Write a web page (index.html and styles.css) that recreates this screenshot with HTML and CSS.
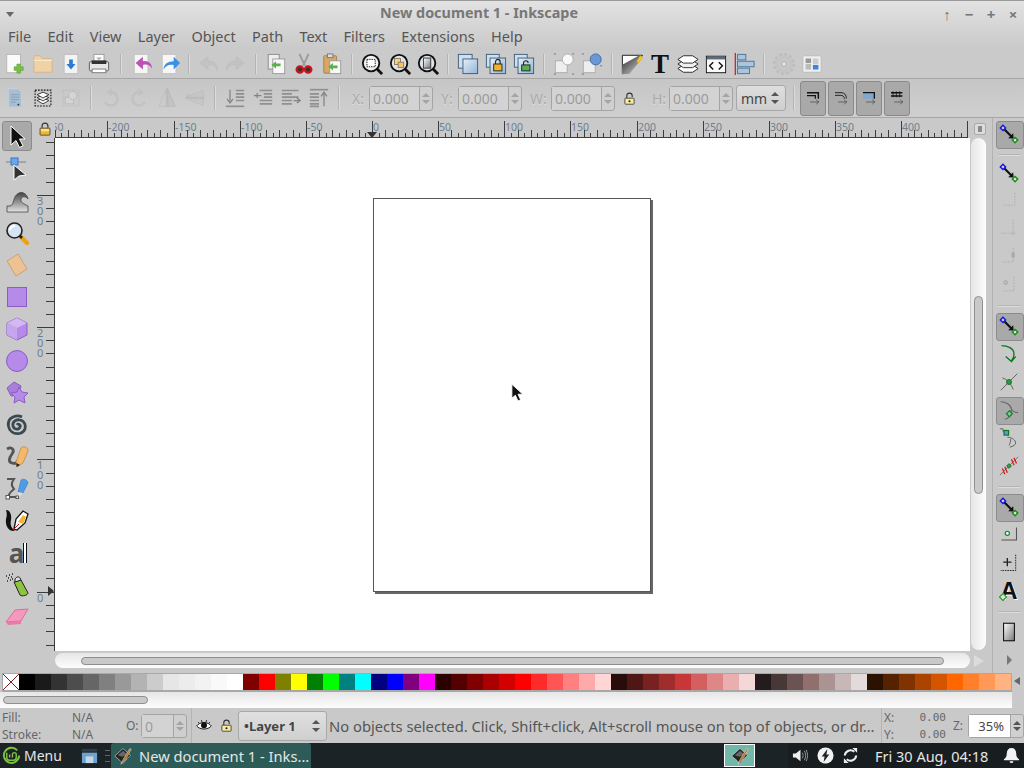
FILE: index.html
```html
<!DOCTYPE html>
<html lang="en">
<head>
  <meta charset="UTF-8">
  <title>New document 1 - Inkscape</title>
  <link rel="stylesheet" href="styles.css">
</head>
<body>

<!-- icon sprite -->
<svg class="sprite" xmlns="http://www.w3.org/2000/svg">
  <defs>
    <linearGradient id="gBlue" x1="0" y1="0" x2="1" y2="1"><stop offset="0" stop-color="#e8f0f8"/><stop offset="1" stop-color="#8fb4d8"/></linearGradient>
    <linearGradient id="gWave" x1="0" y1="0" x2="0" y2="1"><stop offset="0" stop-color="#444"/><stop offset="1" stop-color="#e4e4e4"/></linearGradient>
    <linearGradient id="gGrad" x1="0" y1="0" x2="1" y2="1"><stop offset="0" stop-color="#fff"/><stop offset="1" stop-color="#777"/></linearGradient>
    <linearGradient id="gMetal" x1="0" y1="0" x2="1" y2="1"><stop offset="0" stop-color="#222"/><stop offset="1" stop-color="#ddd"/></linearGradient>
  </defs>
  <symbol id="i-new" viewBox="0 0 24 24"><rect x="3" y="1.500" width="15" height="20" fill="#fbfbfb" stroke="#b5b5b5"/><path d="M14 12h4v3h3v4h-3v3h-4v-3h-3v-4h3z" fill="#78bf45" stroke="#5a9a30" stroke-width=".5"/></symbol>
  <symbol id="i-open" viewBox="0 0 24 24"><path d="M2 21V4l1-1h6l2 3h11v15z" fill="#efd2a6" stroke="#d4b588"/><path d="M2 8h20" stroke="#fbeed8"/></symbol>
  <symbol id="i-save" viewBox="0 0 24 24"><rect x="4.500" y="1.500" width="15" height="21" fill="#f3f3f3" stroke="#bcbcbc"/><path d="M10 7h4v5h3l-5 6-5-6h3z" fill="#2a7cd2"/></symbol>
  <symbol id="i-print" viewBox="0 0 24 24"><rect x="6.500" y="1.500" width="11" height="9" fill="#fff" stroke="#999"/><path d="M9 5h6l-3 3z" fill="#aaa"/><rect x="1.500" y="9.500" width="21" height="10" rx="1.500" fill="#e6e6e6" stroke="#555"/><rect x="4" y="8" width="16" height="4" fill="#333"/><rect x="4.500" y="17.500" width="15" height="4" fill="#fff" stroke="#777"/></symbol>
  <symbol id="i-import" viewBox="0 0 24 24"><rect x="3.500" y="1.500" width="15" height="21" fill="#f6f6f6" stroke="#c2c2c2"/><path d="M23 17c-2-4-6-5-10-4v5L5 11l8-7v5c6-1 10 3 10 8z" fill="#bb52b4"/></symbol>
  <symbol id="i-export" viewBox="0 0 24 24"><rect x="3.500" y="1.500" width="15" height="21" fill="#f6f6f6" stroke="#c2c2c2"/><path d="M5 18c0-6 5-9 11-9V4l7 7-7 7v-5c-5-1-9 1-11 5z" fill="#3a90e2"/></symbol>
  <symbol id="i-undo" viewBox="0 0 24 24"><path d="M22 19c-1-5-5-7-10-6v5L3 11l9-7v5c7-1 11 4 10 10z" fill="#bdbdbd" stroke="#aaa" stroke-width=".5"/></symbol>
  <symbol id="i-redo" viewBox="0 0 24 24"><path d="M2 19c1-5 5-7 10-6v5l9-7-9-7v5C5 8 1 13 2 19z" fill="#bdbdbd" stroke="#aaa" stroke-width=".5"/></symbol>
  <symbol id="i-copy" viewBox="0 0 24 24"><rect x="3.500" y="1.500" width="12" height="16" fill="#eee" stroke="#888"/><rect x="8.500" y="6.500" width="13" height="16" fill="#f8f8f8" stroke="#999"/><path d="M7 13l5-4v2.500h5v3h-5V17z" fill="#5ab04a"/></symbol>
  <symbol id="i-cut" viewBox="0 0 24 24"><path d="M7 1l6 13M17 1l-6 13" stroke="#999" stroke-width="2" fill="none"/><circle cx="7.500" cy="18" r="3.500" fill="#333" stroke="#c8161d" stroke-width="2.500"/><circle cx="16.500" cy="18" r="3.500" fill="#333" stroke="#c8161d" stroke-width="2.500"/></symbol>
  <symbol id="i-paste" viewBox="0 0 24 24"><rect x="3" y="3" width="14" height="19" rx="1" fill="#d5a868" stroke="#a87e48"/><rect x="7" y="1" width="6" height="4" fill="#ddd" stroke="#777"/><rect x="9.500" y="8.500" width="12" height="14" fill="#f8f8f8" stroke="#999"/><path d="M8 15l5-4v2.500h5v3h-5V19z" fill="#5ab04a"/></symbol>
  <symbol id="i-zoomsel" viewBox="0 0 24 24"><circle cx="11" cy="11" r="9" fill="#eef2f7" stroke="#111" stroke-width="2"/><path d="M17 17l6 6" stroke="#111" stroke-width="3"/><rect x="6.500" y="7" width="9" height="8" fill="#fff" stroke="#111" stroke-dasharray="1.500 1"/></symbol>
  <symbol id="i-zoomdraw" viewBox="0 0 24 24"><circle cx="11" cy="11" r="9" fill="#dde6ef" stroke="#111" stroke-width="2"/><path d="M17 17l6 6" stroke="#111" stroke-width="3"/><rect x="6" y="6" width="6.500" height="6.500" fill="#f0d878" stroke="#876"/><rect x="10" y="10" width="6" height="6" fill="#f3c760" stroke="#876"/></symbol>
  <symbol id="i-zoompage" viewBox="0 0 24 24"><circle cx="11" cy="11" r="9" fill="#dde6ef" stroke="#111" stroke-width="2"/><path d="M17 17l6 6" stroke="#111" stroke-width="3"/><rect x="7" y="5.500" width="8" height="11" fill="url(#gGrad)" stroke="#333"/></symbol>
  <symbol id="i-dup" viewBox="0 0 24 24"><rect x="1.500" y="1.500" width="15" height="15" fill="#cde0f0" stroke="#3d5a75"/><rect x="6.500" y="6.500" width="16" height="16" fill="url(#gBlue)" stroke="#3d5a75"/></symbol>
  <symbol id="i-clone" viewBox="0 0 24 24"><rect x="1.500" y="1.500" width="14" height="14" fill="#cde0f0" stroke="#3d5a75"/><rect x="5.500" y="5.500" width="17" height="17" fill="url(#gBlue)" stroke="#3d5a75"/><rect x="9.500" y="12" width="9" height="7.500" fill="#f0b429" stroke="#222"/><path d="M11.500 12V9.500a2.500 2.500 0 0 1 5 0V12" fill="none" stroke="#222" stroke-width="1.200"/></symbol>
  <symbol id="i-unlink" viewBox="0 0 24 24"><rect x="1.500" y="1.500" width="14" height="14" fill="#cde0f0" stroke="#3d5a75"/><rect x="5.500" y="5.500" width="17" height="17" fill="url(#gBlue)" stroke="#3d5a75"/><rect x="9.500" y="13" width="9" height="6.500" fill="#58b04a" stroke="#222"/><path d="M11.500 13v-2a2.500 2.500 0 0 1 5 0" fill="none" stroke="#222" stroke-width="1.200"/></symbol>
  <symbol id="i-group" viewBox="0 0 24 24"><rect x="2.500" y="8.500" width="13" height="13" fill="#eee" stroke="#aaa"/><circle cx="16" cy="7" r="6" fill="#f8f8f8" stroke="#aaa"/><path d="M1 1h2M21 1h2M1 23h2M21 23h2" stroke="#666"/></symbol>
  <symbol id="i-ungroup" viewBox="0 0 24 24"><rect x="2.500" y="8.500" width="13" height="13" fill="#eee" stroke="#aaa"/><circle cx="16" cy="7" r="6" fill="#6b98d4" stroke="#3a6aa8"/><path d="M1 1h2M21 14h2M1 23h2" stroke="#666"/></symbol>
  <symbol id="i-fill" viewBox="0 0 24 24"><path d="M1.500 2.500h22l-20 20h-2z" fill="#fff" stroke="#111"/><path d="M1 23V13L21 2l3 3L9 23z" fill="url(#gMetal)"/><path d="M17 9l4-6 3 2-5 6z" fill="#f5c518"/></symbol>
  <symbol id="i-layers" viewBox="0 0 24 24"><path d="M1 17l6-4h10l6 4-6 4H7z" fill="#fff" stroke="#222"/><path d="M1 12l6-4h10l6 4-6 4H7z" fill="#eee" stroke="#222"/><path d="M1 7l6-4h10l6 4-6 4H7z" fill="#fff" stroke="#222"/></symbol>
  <symbol id="i-xml" viewBox="0 0 24 24"><rect x="1.500" y="3.500" width="21" height="18" fill="#fafafa" stroke="#111"/><rect x="2" y="4" width="20" height="3" fill="#5a6b7b"/><path d="M9 10l-4 4 4 4M15 10l4 4-4 4" fill="none" stroke="#111" stroke-width="1.500"/></symbol>
  <symbol id="i-align" viewBox="0 0 24 24"><rect x="5" y="1.500" width="9" height="6" fill="#a9c5e0" stroke="#50708e"/><rect x="5" y="9" width="18" height="6" fill="#a9c5e0" stroke="#50708e"/><rect x="5" y="16.500" width="13" height="6" fill="#a9c5e0" stroke="#50708e"/><path d="M2.500 0v24" stroke="#c8161d" stroke-width="1.300"/></symbol>
  <symbol id="i-gear" viewBox="0 0 24 24"><circle cx="12" cy="12" r="8" fill="none" stroke="#c4c4c4" stroke-width="5" /><circle cx="12" cy="12" r="11" fill="none" stroke="#bbb" stroke-width="2" stroke-dasharray="3 2.760"/><circle cx="12" cy="12" r="3" fill="#ddd" stroke="#aaa"/></symbol>
  <symbol id="i-doc" viewBox="0 0 24 24"><rect x="2" y="3" width="20" height="18" rx="1" fill="#eee" stroke="#bbb"/><rect x="5" y="6" width="6" height="5" fill="#999"/><rect x="5" y="12" width="6" height="6" fill="#bbb"/><rect x="13" y="6" width="6" height="6" fill="#ccc"/><rect x="13" y="13" width="6" height="5" fill="#3d85d8"/></symbol>
  <symbol id="i-selall" viewBox="0 0 24 24"><path d="M4 1h12l4 4v18H4z" fill="#a9bed2" stroke="#c9d4de"/><path d="M7 8h10M7 11h10M7 14h10M7 17h6" stroke="#7f9ab2"/><rect x="15" y="19" width="2" height="2" fill="#333"/></symbol>
  <symbol id="i-sellayers" viewBox="0 0 24 24"><rect x="2.500" y="2.500" width="19" height="19" fill="none" stroke="#111" stroke-dasharray="2 1.500" stroke-width="1.300"/><path d="M5 15l7-3 7 3-7 4z" fill="#fff" stroke="#222"/><path d="M5 11.500l7-3 7 3-7 4z" fill="#eee" stroke="#222"/><path d="M5 8l7-3 7 3-7 4z" fill="#fff" stroke="#222"/></symbol>
  <symbol id="i-touch" viewBox="0 0 24 24"><rect x="2.500" y="2.500" width="19" height="19" fill="none" stroke="#aaa" stroke-dasharray="2 1.500"/><rect x="5" y="11" width="10" height="8" fill="#ddd" stroke="#aaa"/><circle cx="14" cy="9" r="5" fill="#ddd" stroke="#aaa"/></symbol>
  <symbol id="i-rotl" viewBox="0 0 24 24"><path d="M12 5a8 8 0 1 1-7 12" fill="none" stroke="#bbb" stroke-width="3"/><path d="M13 0v10L6 5z" fill="#bbb"/><circle cx="13" cy="13" r="3" fill="#ccc"/></symbol>
  <symbol id="i-rotr" viewBox="0 0 24 24"><path d="M12 5a8 8 0 1 0 7 12" fill="none" stroke="#bbb" stroke-width="3"/><path d="M11 0v10l7-5z" fill="#bbb"/><circle cx="11" cy="13" r="3" fill="#ccc"/></symbol>
  <symbol id="i-fliph" viewBox="0 0 24 24"><path d="M11 2L2 22h9z" fill="#ccc" stroke="#b3b3b3"/><path d="M13 2l9 20h-9z" fill="#bdbdbd" stroke="#aaa"/><path d="M12 0v24" stroke="#999" stroke-dasharray="2 1"/></symbol>
  <symbol id="i-flipv" viewBox="0 0 24 24"><path d="M22 11L2 8v3z" fill="#ccc" stroke="#b3b3b3"/><path d="M22 3L2 11h20zM22 21L2 13h20z" fill="#c4c4c4" stroke="#b3b3b3"/><path d="M0 12h24" stroke="#999" stroke-dasharray="2 1"/></symbol>
  <symbol id="i-ztop" viewBox="0 0 24 24"><path d="M13 3h10M13 7h10M13 11h10M13 15h10" stroke="#777" stroke-width="2"/><path d="M1 22h22" stroke="#777" stroke-width="2"/><path d="M6 2v14M2.500 13L6 18l3.500-5" fill="none" stroke="#666" stroke-width="1.500"/></symbol>
  <symbol id="i-zup" viewBox="0 0 24 24"><path d="M8 3h15M13 7h10M13 11h10M8 15h15M8 19h15" stroke="#777" stroke-width="2"/><path d="M1 9h9M5 6v6" stroke="#666" stroke-width="1.500"/></symbol>
  <symbol id="i-zdown" viewBox="0 0 24 24"><path d="M1 3h20M1 7h12M1 11h20M1 15h12M1 19h12" stroke="#777" stroke-width="2"/><path d="M15 15h8M19 12l4 3-4 3" fill="none" stroke="#666" stroke-width="1.500"/></symbol>
  <symbol id="i-zbot" viewBox="0 0 24 24"><path d="M1 2h22" stroke="#777" stroke-width="2"/><path d="M1 7h11M1 11h11M1 15h11M1 19h11M1 22h11" stroke="#777" stroke-width="2"/><path d="M18 22V6M14.500 10L18 5l3.500 5" fill="none" stroke="#666" stroke-width="1.500"/></symbol>
  <symbol id="i-sn1" viewBox="0 0 24 24"><path d="M3 4h17v9" fill="none" stroke="#111" stroke-width="2.200"/><path d="M3 8.500h12.500V13" fill="none" stroke="#111" stroke-width="1.800"/><path d="M8 18h12M17 15l4 3-4 3" fill="none" stroke="#111" stroke-dasharray="2 1"/></symbol>
  <symbol id="i-sn2" viewBox="0 0 24 24"><path d="M3 4h9c5 0 8 3 8 9M3 8h8c4 0 6 2 6 5" fill="none" stroke="#111" stroke-width="1.300"/><path d="M8 18h12M17 15l4 3-4 3" fill="none" stroke="#111" stroke-dasharray="2 1"/></symbol>
  <symbol id="i-sn3" viewBox="0 0 24 24"><path d="M3 4h17v9" fill="none" stroke="#111" stroke-width="2"/><rect x="3" y="6" width="15" height="7" fill="#7fa8d0"/><path d="M8 18h12M17 15l4 3-4 3" fill="none" stroke="#111" stroke-dasharray="2 1"/></symbol>
  <symbol id="i-sn4" viewBox="0 0 24 24"><path d="M3 4h17M3 9h17" stroke="#111" stroke-width="2.200"/><path d="M6 2v9M11 2v9M16 2v9" stroke="#111" stroke-width="1.200"/><path d="M8 18h12M17 15l4 3-4 3" fill="none" stroke="#111" stroke-dasharray="2 1"/></symbol>
  <symbol id="i-tsel" viewBox="0 0 24 24"><path d="M6 2v19l5-4.500 3.500 7 3.500-1.800-3.500-6.700H20z" fill="#111" stroke="#fff"/></symbol>
  <symbol id="i-tnode" viewBox="0 0 24 24"><path d="M1 5h20" stroke="#999" stroke-width="1.500"/><rect x="6" y="1" width="7" height="7" fill="#6aa7ec" stroke="#3577c8"/><path d="M9 8v15l5-4 7-1z" fill="#333" stroke="#fff"/></symbol>
  <symbol id="i-ttweak" viewBox="0 0 24 24"><path d="M2 23v-6h3c5-1 2-10 9-13 4-1.500 8 1 9 6-2-3-6-3-7 0-1 3 3 5 7 7v6z" fill="url(#gWave)" stroke="#444" stroke-width=".8"/></symbol>
  <symbol id="i-tzoom" viewBox="0 0 24 24"><path d="M15 15l7 7" stroke="#e8a317" stroke-width="4.500" stroke-linecap="round"/><path d="M14 14l3 3" stroke="#222" stroke-width="2.500"/><circle cx="9.500" cy="9.500" r="7.500" fill="#d6e4f2" stroke="#222" stroke-width="1.600"/><path d="M5 9a5 5 0 0 1 5-4" fill="none" stroke="#fff" stroke-width="2"/></symbol>
  <symbol id="i-tmeasure" viewBox="0 0 24 24"><path d="M2 8l11-7 9 15-11 7z" fill="#eec394" stroke="#c9a178"/></symbol>
  <symbol id="i-trect" viewBox="0 0 24 24"><rect x="2.500" y="2.500" width="19" height="19" fill="#b58ae8" stroke="#8a5cc4"/></symbol>
  <symbol id="i-tbox" viewBox="0 0 24 24"><path d="M12 1l10 5v12l-10 5-10-5V6z" fill="#b58ae8" stroke="#8a5cc4"/><path d="M12 1l10 5-10 5L2 6z" fill="#d4b8f4"/><path d="M2 6l10 5v12L2 18z" fill="#c5a5ee"/></symbol>
  <symbol id="i-tcircle" viewBox="0 0 24 24"><circle cx="12" cy="12" r="10.500" fill="#b58ae8" stroke="#8a5cc4"/></symbol>
  <symbol id="i-tstar" viewBox="0 0 24 24"><path d="M2 7l7-6 7 4-2 9-8 1z" fill="#a77fd8" stroke="#8a5cc4"/><path d="M14 6l3 5 6 1-4 4 1 6-6-3-5 3 1-6-4-4 6-1z" fill="#b58ae8" stroke="#8a5cc4"/></symbol>
  <symbol id="i-tspiral" viewBox="0 0 24 24"><path d="M12 12c1-2 4 0 3 2-1 3-6 3-7-1-1-4 3-7 7-6 5 1 6 6 5 9-2 5-9 6-13 3C3 16 2 10 5 6c3-3 8-4 12-2" fill="none" stroke="#3b4a52" stroke-width="2.800"/></symbol>
  <symbol id="i-tpencil" viewBox="0 0 24 24"><path d="M2 4c5-3 8 1 5 5s-4 8 0 9c3 1 5 0 6-2" fill="none" stroke="#555" stroke-width="2.800"/><path d="M11 17L16 3c2-3 8 0 7 3l-5 12-6 4z" fill="#f4b868" stroke="#a87c38" stroke-width=".6"/><path d="M11.500 22l0-4 3.500 2z" fill="#222"/></symbol>
  <symbol id="i-tpen" viewBox="0 0 24 24"><path d="M2 2h7C6 6 6 9 9 12c-3 2-5 5-6 8h8" fill="none" stroke="#555" stroke-width="2"/><rect x="1" y="18.500" width="3.500" height="3.500" fill="#fff" stroke="#555"/><rect x="11" y="19" width="2.500" height="2.500" fill="#fff" stroke="#555"/><path d="M13 15l3-12c2-2 7 0 7 3l-5 10z" fill="#4f9be8" stroke="#2a6cb0" stroke-width=".5"/><path d="M13 15l5 1-4 4z" fill="#ddd"/></symbol>
  <symbol id="i-tcalli" viewBox="0 0 24 24"><path d="M1 1c4 0 6 5 5 10-1 4 0 8 4 11-6 1-10-5-9-12 1-3 1-6 0-9z" fill="#111"/><path d="M9 20l2-10 7-8 5 3-3 9-8 7z" fill="#fff" stroke="#111" stroke-width="1.300"/><path d="M13 13l5-7 3 2-3 7z" fill="#f2b632"/><path d="M9 20l5-5" stroke="#c8161d"/></symbol>
  <symbol id="i-tspray" viewBox="0 0 24 24"><path d="M9 9l7-2 7 13c0 2-6 4-8 2z" fill="#8cc43f" stroke="#222"/><path d="M10 6c1-2 4-3 5-1l1 2-6 2z" fill="#ddd" stroke="#222"/><path d="M1 3h1M4 2h1M7 1h1M3 5h1M6 4h1M2 8h1M5 7h1M7 6h1" stroke="#222" stroke-width="1.500"/></symbol>
  <symbol id="i-teraser" viewBox="0 0 24 24"><path d="M1 17L10 5l13-1-7 12z" fill="#f598c0" stroke="#d87099"/><path d="M1 17l15-1 0 3-13 1z" fill="#e87aa8"/></symbol>
  <symbol id="i-snap" viewBox="0 0 24 24"><path d="M6 6l9 9" stroke="#111" stroke-width="2.600"/><path d="M11 17l6.500.5L17 11z" fill="#111"/><rect x="2.500" y="2.500" width="4.500" height="4.500" transform="rotate(45 4.750 4.750)" fill="#cfd2ee" stroke="#1414e0" stroke-width="1.700"/><rect x="17" y="17" width="4.500" height="4.500" transform="rotate(45 19.250 19.250)" fill="#d8ecd8" stroke="#1a8a1a" stroke-width="1.700"/></symbol>
  <symbol id="i-s1" viewBox="0 0 24 24"><path d="M19 2v15H5" fill="none" stroke="#aaa" stroke-dasharray="2 1.500"/></symbol>
  <symbol id="i-s2" viewBox="0 0 24 24"><path d="M17 1v16H3" fill="none" stroke="#aaa" stroke-dasharray="2 1.500"/><circle cx="17" cy="17" r="2.500" fill="#bbb"/></symbol>
  <symbol id="i-s3" viewBox="0 0 24 24"><path d="M17 1v17H3" fill="none" stroke="#aaa" stroke-dasharray="2 1.500"/><rect x="15" y="6" width="4" height="7" rx="2" fill="#aaa"/></symbol>
  <symbol id="i-s4" viewBox="0 0 24 24"><path d="M18 2v17H4" fill="none" stroke="#aaa" stroke-dasharray="2 1.500"/><circle cx="8" cy="9" r="2" fill="none" stroke="#aaa" stroke-width="1.500"/></symbol>
  <symbol id="i-s5" viewBox="0 0 24 24"><path d="M3 2c7 0 15 3 15 10 0 3-1 6-3 8" fill="none" stroke="#0a7a20" stroke-width="1.600"/><path d="M8 15l7 6 5-6" fill="none" stroke="#0a7a20" stroke-width="1.600"/></symbol>
  <symbol id="i-s6" viewBox="0 0 24 24"><path d="M2 22L22 2" stroke="#666" stroke-width="1.200"/><path d="M4 7c6 2 10 6 13 14" fill="none" stroke="#666" stroke-width="1.200"/><circle cx="12" cy="12" r="3" fill="#2a9a3a" stroke="#0a6a20"/></symbol>
  <symbol id="i-s7" viewBox="0 0 24 24"><path d="M2 2c5 0 12 3 13 9 1 3 3 4 8 4M7 23c4 0 7-4 8-12" fill="none" stroke="#666" stroke-width="1.300"/><rect x="10" y="14" width="5" height="5" transform="rotate(45 12.500 16.500)" fill="#7fc98f" stroke="#0a7a20" stroke-width="1.300"/></symbol>
  <symbol id="i-s8" viewBox="0 0 24 24"><path d="M1 1h4v4" fill="none" stroke="#666" stroke-width="1.200"/><rect x="6" y="3" width="5.500" height="5.500" fill="#5a98d8" stroke="#0a7a20" stroke-width="1.400"/><path d="M10 11c6 0 10 4 10 7 0 2-3 4-7 5M14 13c0 4-1 6-2 8" fill="none" stroke="#666" stroke-width="1.200"/></symbol>
  <symbol id="i-s9" viewBox="0 0 24 24"><path d="M1 23L23 1" stroke="#666"/><path d="M4 15l3 7M7 13l3 7M15 4l3 7M18 2l3 7" stroke="#d81e1e" stroke-width="1.600"/><rect x="10" y="10" width="4" height="4" transform="rotate(45 12 12)" fill="#3a9a4a" stroke="#0a6a20"/></symbol>
  <symbol id="i-s10" viewBox="0 0 24 24"><path d="M21 3v15H3" fill="none" stroke="#555" stroke-width="1.300"/><circle cx="10" cy="10" r="2.500" fill="#dfe" stroke="#0a8a20" stroke-width="1.400"/></symbol>
  <symbol id="i-s11" viewBox="0 0 24 24"><path d="M5 11h10M10 6v10" stroke="#222" stroke-width="1.600"/><path d="M20 2v19H2" fill="none" stroke="#333" stroke-dasharray="2 1" stroke-width="1.300"/></symbol>
  <symbol id="i-s13" viewBox="0 0 24 24"><rect x="5.500" y="1.500" width="13" height="21" fill="url(#gGrad)" stroke="#111" stroke-width="1.300"/></symbol>
  <symbol id="i-eye" viewBox="0 0 24 24"><path d="M1 12c5-7 17-7 22 0-5 6-17 6-22 0z" fill="#fff" stroke="#111" stroke-width="1.400"/><circle cx="12" cy="11" r="4.500" fill="#111"/><path d="M3 6l2 2M8 3l1 3M16 3l-1 3M21 6l-2 2" stroke="#111" stroke-width="1.200"/></symbol>
  <symbol id="i-lock" viewBox="0 0 24 24"><rect x="3.500" y="10.500" width="17" height="12" rx="1" fill="#f2b632" stroke="#333" stroke-width="1.300"/><rect x="5" y="12" width="14" height="4" fill="#fbe08a"/><path d="M7 10V7a5 5 0 0 1 10 0v3" fill="none" stroke="#333" stroke-width="2"/></symbol>
  <symbol id="i-unlock" viewBox="0 0 24 24"><rect x="3.500" y="11.500" width="17" height="11" rx="1" fill="#fbeb9e" stroke="#333" stroke-width="1.500"/><path d="M7 11V7a5 5 0 0 1 10 0v2" fill="none" stroke="#333" stroke-width="2"/><circle cx="12" cy="17" r="2" fill="#222"/></symbol>
  <symbol id="i-ink" viewBox="0 0 24 24"><path d="M1 12L12 2l10 9-4 4-6 7-4-4z" fill="#222" stroke="#ddd" stroke-width=".8"/><path d="M5 11l7-6 6 5-7 3z" fill="#666"/><path d="M9 23l4-8 8-13 2 1-7 13z" fill="#b8762c" stroke="#eee" stroke-width=".6"/></symbol>
</svg>

<div class="window">
  <div class="head">
    <div class="titlebar">
      <span class="title-arrow"></span>
      <span class="title">New document 1 - Inkscape</span>
      <div class="wm-buttons">
        <span>↑</span><span>−</span><span>+</span><span>×</span>
      </div>
    </div>
    <nav class="menubar">
      <span>File</span><span>Edit</span><span>View</span><span>Layer</span><span>Object</span><span>Path</span><span>Text</span><span>Filters</span><span>Extensions</span><span>Help</span>
    </nav>
  </div>

  <div class="toolbar commands">
    <button class="btn"><svg class="ico"><use href="#i-new"/></svg></button>
    <button class="btn"><svg class="ico"><use href="#i-open"/></svg></button>
    <button class="btn"><svg class="ico"><use href="#i-save"/></svg></button>
    <button class="btn"><svg class="ico"><use href="#i-print"/></svg></button>
    <i class="sep wide"></i>
    <button class="btn"><svg class="ico"><use href="#i-import"/></svg></button>
    <button class="btn"><svg class="ico"><use href="#i-export"/></svg></button>
    <i class="sep narrow"></i>
    <button class="btn off"><svg class="ico"><use href="#i-undo"/></svg></button>
    <button class="btn off"><svg class="ico"><use href="#i-redo"/></svg></button>
    <i class="sep"></i>
    <button class="btn"><svg class="ico"><use href="#i-copy"/></svg></button>
    <button class="btn"><svg class="ico"><use href="#i-cut"/></svg></button>
    <button class="btn"><svg class="ico"><use href="#i-paste"/></svg></button>
    <i class="sep"></i>
    <button class="btn"><svg class="ico"><use href="#i-zoomsel"/></svg></button>
    <button class="btn"><svg class="ico"><use href="#i-zoomdraw"/></svg></button>
    <button class="btn"><svg class="ico"><use href="#i-zoompage"/></svg></button>
    <i class="sep"></i>
    <button class="btn"><svg class="ico"><use href="#i-dup"/></svg></button>
    <button class="btn"><svg class="ico"><use href="#i-clone"/></svg></button>
    <button class="btn"><svg class="ico"><use href="#i-unlink"/></svg></button>
    <i class="sep"></i>
    <button class="btn"><svg class="ico"><use href="#i-group"/></svg></button>
    <button class="btn"><svg class="ico"><use href="#i-ungroup"/></svg></button>
    <i class="sep"></i>
    <button class="btn"><svg class="ico"><use href="#i-fill"/></svg></button>
    <button class="btn"><span class="big-t">T</span></button>
    <button class="btn"><svg class="ico"><use href="#i-layers"/></svg></button>
    <button class="btn"><svg class="ico"><use href="#i-xml"/></svg></button>
    <button class="btn"><svg class="ico"><use href="#i-align"/></svg></button>
    <i class="sep"></i>
    <button class="btn"><svg class="ico"><use href="#i-gear"/></svg></button>
    <button class="btn"><svg class="ico"><use href="#i-doc"/></svg></button>
  </div>

  <div class="toolbar controls">
    <button class="btn"><svg class="ico"><use href="#i-selall"/></svg></button>
    <button class="btn"><svg class="ico"><use href="#i-sellayers"/></svg></button>
    <button class="btn off"><svg class="ico"><use href="#i-touch"/></svg></button>
    <i class="sep tall"></i>
    <button class="btn off"><svg class="ico"><use href="#i-rotl"/></svg></button>
    <button class="btn off"><svg class="ico"><use href="#i-rotr"/></svg></button>
    <button class="btn off"><svg class="ico"><use href="#i-fliph"/></svg></button>
    <button class="btn off"><svg class="ico"><use href="#i-flipv"/></svg></button>
    <i class="sep tall"></i>
    <button class="btn dim"><svg class="ico"><use href="#i-ztop"/></svg></button>
    <button class="btn dim"><svg class="ico"><use href="#i-zup"/></svg></button>
    <button class="btn dim"><svg class="ico"><use href="#i-zdown"/></svg></button>
    <button class="btn dim"><svg class="ico"><use href="#i-zbot"/></svg></button>
    <i class="sep tall"></i>
    <label class="coord">X:</label>
    <div class="spin"><span class="spin-value">0.000</span><span class="spin-arrows"></span></div>
    <label class="coord">Y:</label>
    <div class="spin"><span class="spin-value">0.000</span><span class="spin-arrows"></span></div>
    <label class="coord coord-w">W:</label>
    <div class="spin"><span class="spin-value">0.000</span><span class="spin-arrows"></span></div>
    <svg class="ico-lock"><use href="#i-unlock"/></svg>
    <label class="coord">H:</label>
    <div class="spin"><span class="spin-value">0.000</span><span class="spin-arrows"></span></div>
    <div class="combo unit"><span>mm</span><span class="spin-arrows dark"></span></div>
    <i class="sep tall unit-sep"></i>
    <button class="toggle"><svg class="ico"><use href="#i-sn1"/></svg></button>
    <button class="toggle"><svg class="ico"><use href="#i-sn2"/></svg></button>
    <button class="toggle"><svg class="ico"><use href="#i-sn3"/></svg></button>
    <button class="toggle"><svg class="ico"><use href="#i-sn4"/></svg></button>
  </div>

  <div class="workspace">
    <div class="toolbox">
      <button class="tool active"><svg class="tool-ico"><use href="#i-tsel"/></svg></button>
      <button class="tool"><svg class="tool-ico"><use href="#i-tnode"/></svg></button>
      <button class="tool"><svg class="tool-ico"><use href="#i-ttweak"/></svg></button>
      <button class="tool"><svg class="tool-ico"><use href="#i-tzoom"/></svg></button>
      <button class="tool"><svg class="tool-ico"><use href="#i-tmeasure"/></svg></button>
      <button class="tool"><svg class="tool-ico"><use href="#i-trect"/></svg></button>
      <button class="tool"><svg class="tool-ico"><use href="#i-tbox"/></svg></button>
      <button class="tool"><svg class="tool-ico"><use href="#i-tcircle"/></svg></button>
      <button class="tool"><svg class="tool-ico"><use href="#i-tstar"/></svg></button>
      <button class="tool"><svg class="tool-ico"><use href="#i-tspiral"/></svg></button>
      <button class="tool"><svg class="tool-ico"><use href="#i-tpencil"/></svg></button>
      <button class="tool"><svg class="tool-ico"><use href="#i-tpen"/></svg></button>
      <button class="tool"><svg class="tool-ico"><use href="#i-tcalli"/></svg></button>
      <button class="tool"><span class="text-tool"><span>a</span><i></i></span></button>
      <button class="tool"><svg class="tool-ico"><use href="#i-tspray"/></svg></button>
      <button class="tool"><svg class="tool-ico"><use href="#i-teraser"/></svg></button>
    </div>

    <div class="canvas-grid">
      <div class="corner"><svg class="corner-lock"><use href="#i-lock"/></svg></div>
      <svg class="hruler" id="hruler"></svg>
      <div class="corner-right"><span class="cms-btn"></span></div>

      <svg class="vruler" id="vruler"></svg>
      <div class="canvas">
        <div class="page"></div>
        <svg class="cursor" viewBox="0 0 16 22"><path d="M1 1v16l4-3.500 3 6.500 3-1.300-3-6.300h5.500z" fill="#111" stroke="#fff"/></svg>
      </div>
      <div class="vscroll"><div class="vthumb"></div></div>

      <div class="hscroll-gap"></div>
      <div class="hscroll"><div class="hthumb"></div></div>
      <div class="scroll-corner"><span class="corner-tri"></span></div>
    </div>

    <div class="snapbar">
      <div class="snap on"><svg class="snap-ico"><use href="#i-snap"/></svg></div>
      <i class="snap-sep first"></i>
      <div class="snap"><svg class="snap-ico"><use href="#i-snap"/></svg></div>
      <div class="snap"><svg class="snap-ico"><use href="#i-s1"/></svg></div>
      <div class="snap"><svg class="snap-ico"><use href="#i-s2"/></svg></div>
      <div class="snap"><svg class="snap-ico"><use href="#i-s3"/></svg></div>
      <div class="snap"><svg class="snap-ico"><use href="#i-s4"/></svg></div>
      <i class="snap-sep"></i>
      <div class="snap on"><svg class="snap-ico"><use href="#i-snap"/></svg></div>
      <div class="snap"><svg class="snap-ico"><use href="#i-s5"/></svg></div>
      <div class="snap"><svg class="snap-ico"><use href="#i-s6"/></svg></div>
      <div class="snap on"><svg class="snap-ico"><use href="#i-s7"/></svg></div>
      <div class="snap"><svg class="snap-ico"><use href="#i-s8"/></svg></div>
      <div class="snap"><svg class="snap-ico"><use href="#i-s9"/></svg></div>
      <i class="snap-sep"></i>
      <div class="snap on"><svg class="snap-ico"><use href="#i-snap"/></svg></div>
      <div class="snap"><svg class="snap-ico"><use href="#i-s10"/></svg></div>
      <div class="snap"><svg class="snap-ico"><use href="#i-s11"/></svg></div>
      <div class="snap snap-text"><span class="snap-a">A</span></div>
      <i class="snap-sep"></i>
      <div class="snap"><svg class="snap-ico"><use href="#i-s13"/></svg></div>
      <div class="snap more"><span class="more-tri"></span></div>
    </div>
  </div>

  <div class="palette-row">
    <div class="palette" id="palette">
      <span class="swatch none"></span>
    </div>
    <span class="palette-menu"></span>
  </div>
  <div class="palette-scroll-row">
    <div class="palette-scroll"><div class="palette-thumb"></div></div>
  </div>

  <div class="status">
    <div class="fillstroke">
      <span>Fill:</span><span>N/A</span>
      <span>Stroke:</span><span>N/A</span>
    </div>
    <div class="opacity">
      <span class="o-label">O:</span>
      <div class="spin small"><span class="spin-value">0</span><span class="spin-arrows"></span></div>
    </div>
    <svg class="status-ico eye"><use href="#i-eye"/></svg>
    <svg class="status-ico padlock"><use href="#i-unlock"/></svg>
    <div class="combo layer"><span>•Layer 1</span><span class="spin-arrows dark"></span></div>
    <div class="message">No objects selected. Click, Shift+click, Alt+scroll mouse on top of objects, or dr...</div>
    <div class="coords">
      <span>X:</span><span class="num">0.00</span>
      <span>Y:</span><span class="num">0.00</span>
    </div>
    <span class="z-label">Z:</span>
    <div class="zoom-spin"><span class="zoom-value">35%</span><span class="spin-arrows dark"></span></div>
  </div>

  <div class="taskbar">
    <svg class="mint" viewBox="0 0 20 20"><path d="M16 4.500A8 8 0 1 0 18 10" fill="none" stroke="#7fc241" stroke-width="2"/><path d="M5 7v5a3 3 0 0 0 3 3h4a3 3 0 0 0 3-3V9a2 2 0 0 0-4 0v3M8 9v3" fill="none" stroke="#7fc241" stroke-width="1.500"/></svg>
    <span class="menu-label">Menu</span>
    <svg class="files" viewBox="0 0 18 18"><rect x="1" y="2" width="16" height="3" fill="#2d3c48"/><rect x="1" y="6" width="16" height="11" fill="#6fa2cf"/><rect x="5" y="10" width="8" height="7" fill="#c2d8ea"/></svg>
    <span class="grip"></span>
    <div class="task-active">
      <svg class="task-ico"><use href="#i-ink"/></svg>
      <span>New document 1 - Inks...</span>
    </div>
    <div class="pager"><svg class="task-ico"><use href="#i-ink"/></svg></div>
    <div class="tray">
      <svg class="tray-ico" viewBox="0 0 18 18"><path d="M1 7h3l5-4v12l-5-4H1z" fill="#eee"/><path d="M11 6c1 2 1 4 0 6M13 4c2 3 2 7 0 10M15 3c2 4 2 8 0 12" fill="none" stroke="#999"/></svg>
      <svg class="tray-ico" viewBox="0 0 18 18"><circle cx="9" cy="9" r="8.500" fill="#f2f2f2"/><path d="M11 2L5 10h3l-1 6 6-8h-3z" fill="#1c2326"/></svg>
      <svg class="tray-ico" viewBox="0 0 18 18"><path d="M3 9a6 6 0 0 1 10-4M15 9a6 6 0 0 1-10 4" fill="none" stroke="#eee" stroke-width="2.200"/><path d="M11 1h5v5zM7 17H2v-5z" fill="#eee"/></svg>
      <span class="clock">Fri 30 Aug, 04:18</span>
      <svg class="tray-ico bell" viewBox="0 0 18 18"><path d="M9 1c3 0 5 2 5 6 0 3 1 5 3 6v1H1v-1c2-1 3-3 3-6 0-4 2-6 5-6zM7 15h4a2 2 0 0 1-4 0z" fill="#f2f2f2"/></svg>
    </div>
  </div>
</div>

<script src="app.js"></script>
</body>
</html>
```

FILE: styles.css
```css
* {
  margin: 0;
  padding: 0;
  box-sizing: border-box;
}

html, body {
  width: 100%;
  height: 100%;
  overflow: hidden;
  background: #c9c9c9;
}

body {
  font-family: "Noto Sans", sans-serif;
  color: #555;
}

.sprite {
  position: absolute;
  width: 0;
  height: 0;
}

button {
  background: none;
  border: none;
  font-family: inherit;
}

.window {
  width: 1024px;
  height: 768px;
  display: flex;
  flex-direction: column;
}

/* title + menu */
.head {
  height: 50px;
  background: linear-gradient(#e2e2e2, #c9c9c9);
  border-top: 1px solid #9a9a9a;
}

.titlebar {
  height: 25px;
  position: relative;
  display: flex;
  align-items: center;
  justify-content: center;
  padding: 0 66px 2px 0;
}

.title {
  font-size: 14.400px;
  font-weight: bold;
  color: #777;
}

.title-arrow {
  position: absolute;
  left: 6px;
  top: 11px;
  border-top: 5px solid #666;
  border-left: 4px solid transparent;
  border-right: 4px solid transparent;
}

.wm-buttons {
  position: absolute;
  right: 0;
  top: 0;
  height: 25px;
  display: flex;
  align-items: center;
}

.wm-buttons span {
  width: 22px;
  text-align: center;
  font-size: 15px;
  font-weight: bold;
  color: #777;
}

.menubar {
  height: 24px;
  display: flex;
  align-items: center;
  padding: 0 0 4px 8px;
  gap: 16.300px;
  font-size: 14.500px;
  color: #555;
}

/* toolbars */
.toolbar {
  display: flex;
  align-items: center;
}

.commands {
  height: 28px;
  padding-left: 1px;
  background: #cacaca;
}

.controls {
  height: 40px;
  padding-left: 1px;
  background: linear-gradient(#c6c6c6, #cfcfcf);
  border-top: 1px solid #a6a6a6;
  border-bottom: 1px solid #a6a6a6;
}

.btn {
  width: 28px;
  height: 28px;
  flex: none;
  display: flex;
  align-items: center;
  justify-content: center;
}

.ico {
  width: 20px;
  height: 20px;
}

.commands .ico {
  width: 22px;
  height: 22px;
}

.off .ico {
  opacity: .55;
}

.dim .ico {
  opacity: .7;
}

.sep {
  width: 1px;
  height: 20px;
  margin: 0 6px 0 5px;
  background: #b4b4b4;
  box-shadow: 1px 0 0 #dcdcdc;
  flex: none;
}

.sep.wide {
  margin: 0 7px 0 7px;
}

.sep.narrow {
  margin: 0 5px 0 4px;
}

.sep.tall {
  height: 24px;
}

.big-t {
  font-family: "Liberation Serif", serif;
  font-weight: bold;
  font-size: 27px;
  line-height: 1;
  color: #111;
}

.coord {
  width: 17px;
  margin-left: 7px;
  font-size: 14px;
  color: #a9a9a9;
  text-shadow: 0 1px 0 #e0e0e0;
}

.coord-w {
  width: 21px;
}

.spin {
  width: 64px;
  height: 25px;
  display: flex;
  border: 1px solid #a4a4a4;
  border-radius: 3px;
  background: #cfcfcf;
  margin-right: 1px;
  flex: none;
}

.spin-value {
  flex: 1;
  padding-left: 3px;
  font-size: 14px;
  line-height: 23px;
  color: #9c9c9c;
  background: #d3d3d3;
  border-right: 1px solid #a4a4a4;
}

.spin-arrows {
  width: 12px;
  position: relative;
  flex: none;
}

.spin-arrows::before,
.spin-arrows::after {
  content: "";
  position: absolute;
  left: 2px;
  border-left: 4px solid transparent;
  border-right: 4px solid transparent;
}

.spin-arrows::before {
  top: 6px;
  border-bottom: 4px solid #a4a4a4;
}

.spin-arrows::after {
  bottom: 6px;
  border-top: 4px solid #a4a4a4;
}

.spin-arrows.dark::before {
  border-bottom-color: #555;
}

.spin-arrows.dark::after {
  border-top-color: #555;
}

.ico-lock {
  width: 13px;
  height: 13px;
  margin: 0 9px 0 7px;
  flex: none;
}

.combo {
  display: flex;
  align-items: center;
  justify-content: space-between;
  border: 1px solid #a8a8a8;
  border-radius: 3px;
  background: linear-gradient(#dedede, #cfcfcf);
  font-size: 14px;
  color: #444;
  flex: none;
}

.combo .spin-arrows {
  height: 24px;
}

.unit {
  width: 50px;
  height: 26px;
  margin-left: 2px;
  padding: 0 4px 0 4px;
}

.unit-sep {
  margin-left: 7px;
}

.toggle {
  width: 26px;
  height: 35px;
  margin-right: 2px;
  display: flex;
  align-items: center;
  justify-content: center;
  background: #a9a9a9;
  border: 1px solid #8a8a8a;
  border-radius: 3px;
  flex: none;
}

.toggle .ico {
  width: 16px;
  height: 16px;
}

/* main area */
.workspace {
  height: 555px;
  display: flex;
}

.toolbox {
  width: 33px;
  padding: 3px 0 0 2px;
  display: flex;
  flex-direction: column;
  flex: none;
}

.tool {
  width: 30px;
  height: 32px;
  flex: none;
  display: flex;
  align-items: center;
  justify-content: center;
}

.tool.active {
  height: 30px;
  margin-bottom: 2px;
  background: #a9a9a9;
  border: 1px solid #8c8c8c;
  border-radius: 3px;
}

.tool-ico {
  width: 24px;
  height: 24px;
}

.text-tool {
  display: flex;
  align-items: center;
}

.text-tool span {
  font-size: 26px;
  font-weight: bold;
  line-height: 24px;
  color: #555;
  margin-left: 2px;
}

.text-tool i {
  width: 4px;
  height: 20px;
  margin-left: -1px;
  background: #fff;
  border: 1px solid #111;
  border-width: 0 1px;
}

.canvas-grid {
  width: 959px;
  display: grid;
  grid-template-columns: 22px 915px 22px;
  grid-template-rows: 20px 513px 22px;
  flex: none;
}

.corner {
  padding: 4px 0 0 5px;
}

.corner-lock {
  width: 14px;
  height: 14px;
  display: block;
}

.hruler,
.vruler {
  display: block;
  background: #c9c9c9;
}

.hruler {
  width: 915px;
  height: 20px;
}

.vruler {
  width: 22px;
  height: 513px;
}

.hruler text,
.vruler text {
  font-family: "Noto Sans", sans-serif;
  fill: #6f7f8e;
}

.hruler text {
  font-size: 10.500px;
}

.vruler text {
  font-size: 11px;
}

.corner-right {
  padding: 5px 0 0 4px;
}

.cms-btn {
  display: block;
  width: 12px;
  height: 12px;
  background: #dcdcdc;
  border: 1px solid #aaa;
  border-radius: 2px;
  box-shadow: inset 3px 2px 0 #dcdcdc, inset -3px -2px 0 #dcdcdc, inset 0 0 0 5px #888;
}

.canvas {
  position: relative;
  overflow: hidden;
  background: #fff;
}

.page {
  position: absolute;
  left: 318px;
  top: 60px;
  width: 278px;
  height: 394px;
  background: #fff;
  border: 1px solid #555;
  box-shadow: 2px 2px 0 #666;
}

.cursor {
  position: absolute;
  left: 456px;
  top: 245px;
  width: 14px;
  height: 20px;
}

.vscroll {
  position: relative;
  background: #c9c9c9;
}

.vscroll::before {
  content: "";
  position: absolute;
  left: 1px;
  top: 0;
  width: 15px;
  height: 512px;
  border-radius: 8px;
  background: linear-gradient(90deg, #e6e6e6, #fdfdfd);
}

.vthumb {
  position: absolute;
  left: 4px;
  top: 158px;
  width: 9px;
  height: 198px;
  background: #c9c9c9;
  border: 1px solid #8f8f8f;
  border-radius: 5px;
}

.hscroll-gap,
.scroll-corner {
  background: #c9c9c9;
}

.hscroll {
  height: 18px;
  padding-top: 2px;
  position: relative;
}

.hscroll::before {
  content: "";
  position: absolute;
  left: 0;
  top: 2px;
  width: 100%;
  height: 15px;
  border-radius: 8px;
  background: linear-gradient(#e6e6e6, #fdfdfd);
}

.hthumb {
  position: absolute;
  left: 26px;
  top: 6px;
  width: 863px;
  height: 8px;
  background: #c9c9c9;
  border: 1px solid #8f8f8f;
  border-radius: 4px;
}

.scroll-corner {
  padding: 4px 0 0 4px;
}

.corner-tri {
  display: block;
  width: 0;
  height: 0;
  border-left: 10px solid #dcdcdc;
  border-top: 6px solid transparent;
  border-bottom: 6px solid transparent;
}

.snapbar {
  width: 32px;
  padding: 2px 0 0 2px;
  border-left: 1px solid #b2b2b2;
  display: flex;
  flex-direction: column;
  position: relative;
}

.snap {
  width: 28px;
  height: 28px;
  display: flex;
  align-items: center;
  justify-content: center;
  flex: none;
}

.snap-ico {
  width: 20px;
  height: 20px;
}

.snap.on {
  position: relative;
}

.snap.on::before {
  content: "";
  position: absolute;
  left: 1px;
  top: 1px;
  width: 26px;
  height: 26px;
  background: #a9a9a9;
  border: 1px solid #8c8c8c;
  border-radius: 3px;
}

.snap.on .snap-ico {
  position: relative;
}

.snap-sep {
  display: block;
  height: 13px;
  margin: 0 3px;
  flex: none;
  background: linear-gradient(transparent 6px, #b6b6b6 6px, #b6b6b6 7px, #dcdcdc 7px, #dcdcdc 8px, transparent 8px);
}

.snap-sep.first {
  height: 11px;
}

.snap-text {
  position: relative;
}

/* green node under the A */
.snap-text::after {
  content: "";
  position: absolute;
  left: 5px;
  bottom: 5px;
  width: 4px;
  height: 4px;
  transform: rotate(45deg);
  background: #cfe8cf;
  border: 1px solid #1a8a1a;
}

.snap-a {
  font-family: "Liberation Sans", sans-serif;
  font-weight: bold;
  font-size: 24px;
  line-height: 1;
  color: #111;
  text-shadow: 1px 1px 0 #fff;
}

.more-tri {
  display: block;
  width: 0;
  height: 0;
  border-left: 5px solid #777;
  border-top: 5px solid transparent;
  border-bottom: 5px solid transparent;
}

/* palette */
.palette-row {
  height: 19px;
  padding-left: 2px;
  display: flex;
  flex: none;
}

.palette {
  width: 1010px;
  height: 19px;
  display: flex;
  border: 1px solid #a8a8a8;
  border-width: 1px 1px 2px;
  background: #d2d2d2;
  flex: none;
}

.swatch {
  width: 16px;
  height: 16px;
  flex: none;
}

.swatch.none {
  background:
    linear-gradient(45deg, transparent 47%, #7a1a1a 47%, #7a1a1a 53%, transparent 53%),
    linear-gradient(-45deg, #fff 47%, #7a1a1a 47%, #7a1a1a 53%, #fff 53%);
}

.palette-menu {
  margin: 4px 0 0 2px;
  width: 0;
  height: 0;
  border-right: 6px solid #666;
  border-top: 4px solid transparent;
  border-bottom: 4px solid transparent;
}

.palette-scroll-row {
  height: 16px;
  flex: none;
}

.palette-scroll {
  width: 1012px;
  height: 16px;
  padding: 4px 0 0 3px;
  background: linear-gradient(#e6e6e6, #fdfdfd);
}

.palette-thumb {
  width: 145px;
  height: 8px;
  background: #c9c9c9;
  border: 1px solid #8f8f8f;
  border-radius: 4px;
}

/* status bar */
.status {
  height: 35px;
  display: flex;
  align-items: center;
  flex: none;
  font-size: 12px;
}

.fillstroke {
  width: 121px;
  padding-left: 2px;
  display: grid;
  grid-template-columns: 70px 1fr;
  line-height: 17px;
  flex: none;
  color: #666;
}

.opacity {
  width: 71px;
  height: 35px;
  display: flex;
  align-items: center;
  padding-left: 5px;
  border-right: 1px solid #b4b4b4;
  flex: none;
}

.o-label {
  width: 15px;
  color: #666;
  font-size: 12px;
}

.spin.small {
  width: 46px;
  height: 24px;
  margin: 0;
}

.status-ico {
  width: 13px;
  height: 13px;
  flex: none;
}

.eye {
  width: 16px;
  height: 16px;
  margin-left: 4px;
}

.padlock {
  margin-left: 8px;
}

.layer {
  width: 89px;
  height: 30px;
  margin-left: 5px;
  padding: 0 4px 0 5px;
  font-size: 13px;
  font-weight: bold;
  background: linear-gradient(#e0e0e0, #cfcfcf);
}

.message {
  width: 554px;
  padding-left: 2px;
  font-size: 14.750px;
  color: #555;
  white-space: nowrap;
  flex: none;
}

.coords {
  width: 67px;
  height: 35px;
  padding: 1px 0 0 2px;
  display: grid;
  grid-template-columns: 30px 32px;
  line-height: 17px;
  border-left: 1px solid #b4b4b4;
  color: #666;
  flex: none;
}

.num {
  font-family: "DejaVu Sans Mono", monospace;
  font-size: 11px;
  text-align: right;
}

.z-label {
  margin-left: 5px;
  width: 16px;
  font-size: 12px;
  color: #666;
}

.zoom-spin {
  width: 56px;
  height: 24px;
  display: flex;
  border: 1px solid #a4a4a4;
  border-radius: 3px;
  background: #d0d0d0;
  flex: none;
}

.zoom-value {
  flex: 1;
  padding-right: 6px;
  text-align: right;
  font-size: 13px;
  line-height: 22px;
  color: #444;
  background: #fff;
  border-right: 1px solid #a4a4a4;
}

/* desktop panel */
.taskbar {
  height: 25px;
  background: #1c2326;
  display: flex;
  align-items: center;
  flex: none;
  color: #e6e6e6;
  font-size: 14px;
}

.mint {
  width: 19px;
  height: 19px;
  margin-left: 2px;
  flex: none;
}

.menu-label {
  width: 60px;
  margin-left: 3px;
  flex: none;
}

.files {
  width: 17px;
  height: 17px;
  flex: none;
  margin-left: -3px;
}

.grip {
  width: 5px;
  height: 12px;
  margin: 0 1px 0 7px;
  border-top: 1px solid #666;
  border-bottom: 1px solid #666;
  background: linear-gradient(transparent 4px, #666 4px, #666 5px, transparent 5px);
  flex: none;
}

.task-active {
  width: 200px;
  height: 25px;
  padding-left: 3px;
  display: flex;
  align-items: center;
  gap: 7px;
  font-size: 14.700px;
  white-space: nowrap;
  background: #2d5c58;
  border-radius: 3px 3px 0 0;
  flex: none;
}

.task-ico {
  width: 18px;
  height: 18px;
  flex: none;
}

.pager {
  width: 31px;
  height: 23px;
  margin-left: 413px;
  display: flex;
  align-items: center;
  justify-content: center;
  background: #71b8aa;
  border: 1px solid #fff;
  flex: none;
}

.tray {
  flex: 1;
  height: 25px;
  margin-left: 33px;
  padding-left: 4px;
  display: flex;
  align-items: center;
  background: #181d20;
}

.tray-ico {
  width: 17px;
  height: 17px;
  margin-right: 8px;
  flex: none;
}

.clock {
  width: 128px;
  margin-left: 8px;
  font-size: 14.500px;
  white-space: nowrap;
  flex: none;
}

.bell {
  margin: 0;
}
```

FILE: app.js
```js
// colours of the default palette, after the "none" swatch
const colours = [
  '#000000', '#1a1a1a', '#333333', '#4d4d4d', '#666666', '#808080', '#999999', '#b3b3b3', '#cccccc', '#e6e6e6', '#ececec', '#f2f2f2', '#f9f9f9', '#ffffff',
  '#800000', '#ff0000', '#808000', '#ffff00', '#008000', '#00ff00', '#008080', '#00ffff', '#000080', '#0000ff', '#800080', '#ff00ff',
  '#2b0000', '#550000', '#800000', '#aa0000', '#d40000', '#ff0000', '#ff2a2a', '#ff5555', '#ff8080', '#ffaaaa', '#ffd5d5',
  '#280b0b', '#501616', '#782121', '#a02c2c', '#c83737', '#d35f5f', '#de8787', '#e9afaf', '#f4d7d7',
  '#241c1c', '#483737', '#6c5353', '#916f6f', '#ac9393', '#c8b7b7', '#e3dbdb',
  '#2b1100', '#552200', '#803300', '#aa4400', '#d45500', '#ff6600', '#ff7f2a', '#ff9955', '#ffb380'
];

const palette = document.getElementById('palette');
colours.forEach(c => {
  const s = document.createElement('span');
  s.className = 'swatch';
  s.style.background = c;
  palette.appendChild(s);
});

// rulers: 1.3228px per unit
const SCALE = 1.3228;
const tickColor = '#3c3c3c';

function tick(x, y, w, h) {
  return `<rect x="${x}" y="${y}" width="${w}" height="${h}" fill="${tickColor}"/>`;
}

// horizontal ruler, zero at x=317 inside the svg, baseline at y=19
let h = tick(0, 19, 913, 1);
for (let u = -250; u <= 450; u += 5) {
  const x = Math.round(317 + u * SCALE);
  if (u % 50 === 0 && x < 880) {
    h += `<text x="${x + 1}" y="13">${u}</text>`;
  }
  if (x < 0 || x > 913) continue;
  if (u % 50 === 0) {
    h += tick(x, 3, 1, 16);
  } else if (u % 10 === 0) {
    h += tick(x, 12, 1, 7);
  } else {
    h += tick(x, 15, 1, 4);
  }
}
h += '<path d="M312 14h10l-5 6z" fill="#333"/>';
document.getElementById('hruler').innerHTML = h;

// vertical ruler, zero at y=453.6 inside the svg, digits stacked
let v = tick(21, 0, 1, 513);
for (let u = -50; u <= 350; u += 10) {
  const y = Math.round(453.6 - u * SCALE);
  if (y < 0 || y > 512) continue;
  if (u % 100 === 0 && u >= 0) {
    v += tick(4, y, 17, 1);
    const digits = String(u).split('').map((d, i) => `<tspan x="4" dy="${i ? 10 : 0}">${d}</tspan>`).join('');
    v += `<text y="${y + 10}">${digits}</text>`;
  } else {
    v += tick(13, y, 8, 1);
  }
}
v += '<path d="M15 448l6 5-6 5z" fill="#333"/>';
document.getElementById('vruler').innerHTML = v;
```
